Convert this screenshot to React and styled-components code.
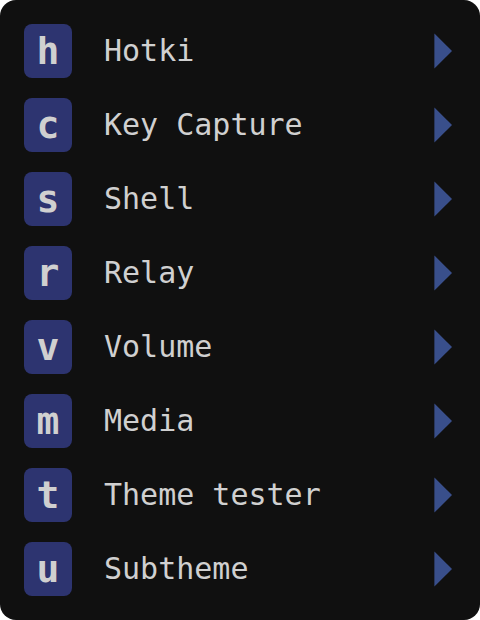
import React from "react";
import styled, { createGlobalStyle } from "styled-components";

const GlobalStyle = createGlobalStyle`
  *, *::before, *::after { box-sizing: border-box; }
  body { margin: 0; background: #ffffff; }
`;

const Panel = styled.nav`
  background: #101010;
  border-radius: 16px;
  padding: 24px 28px 24px 24px;
`;

const MenuList = styled.ul`
  display: flex;
  flex-direction: column;
  gap: 20px;
  margin: 0;
  padding: 0;
  list-style: none;
`;

const MenuButton = styled.button`
  display: flex;
  align-items: center;
  width: 100%;
  padding: 0;
  border: 0;
  background: none;
  color: #d0d0d0;
  font-family: "DejaVu Sans Mono", "Liberation Mono", monospace;
  text-align: left;
  cursor: pointer;
`;

const KeyCap = styled.kbd`
  display: flex;
  align-items: center;
  justify-content: center;
  flex: none;
  width: 48px;
  height: 54px;
  border-radius: 8px;
  background: #2d3470;
  font-family: inherit;
  font-size: 38px;
  font-weight: 700;
  line-height: 54px;
`;

const Label = styled.span`
  flex: 1;
  margin-left: 32px;
  font-size: 30px;
  line-height: 54px;
  white-space: nowrap;
`;

const Arrow = styled.svg`
  flex: none;
  width: 18px;
  height: 36px;
  fill: #394f8b;
`;

const items = [
  { key: "h", label: "Hotki" },
  { key: "c", label: "Key Capture" },
  { key: "s", label: "Shell" },
  { key: "r", label: "Relay" },
  { key: "v", label: "Volume" },
  { key: "m", label: "Media" },
  { key: "t", label: "Theme tester" },
  { key: "u", label: "Subtheme" },
];

export default function App() {
  return (
    <>
      <GlobalStyle />
      <Panel>
        <MenuList>
          {items.map((item) => (
            <li key={item.key}>
              <MenuButton type="button">
                <KeyCap>{item.key}</KeyCap>
                <Label>{item.label}</Label>
                <Arrow viewBox="0 0 18 36" aria-hidden="true">
                  <path d="M0.4 0.4 L18 18 L0.4 35.6 Z" />
                </Arrow>
              </MenuButton>
            </li>
          ))}
        </MenuList>
      </Panel>
    </>
  );
}
